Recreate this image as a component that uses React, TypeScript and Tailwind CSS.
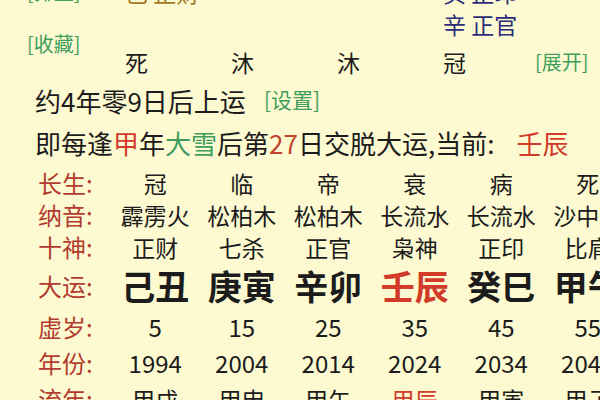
import React from 'react';

const green = 'text-[#3f9e5c]';

const rows: { label: string; values: string[]; kind?: 'big' | 'num' }[] = [
  { label: '长生:', values: ['冠', '临', '帝', '衰', '病', '死'] },
  { label: '纳音:', values: ['霹雳火', '松柏木', '松柏木', '长流水', '长流水', '沙中金'] },
  { label: '十神:', values: ['正财', '七杀', '正官', '枭神', '正印', '比肩'] },
  { label: '大运:', values: ['己丑', '庚寅', '辛卯', '壬辰', '癸巳', '甲午'], kind: 'big' },
  { label: '虚岁:', values: ['5', '15', '25', '35', '45', '55'], kind: 'num' },
  { label: '年份:', values: ['1994', '2004', '2014', '2024', '2034', '2044'], kind: 'num' },
  { label: '流年:', values: ['甲戌', '甲申', '甲午', '甲辰', '甲寅', '甲子'] },
];

const rowHeight: Record<string, string> = {
  '长生:': 'h-[32px]',
  '纳音:': 'h-[32px]',
  '十神:': 'h-[32px]',
  '大运:': 'h-[46px]',
  '虚岁:': 'h-[36px]',
  '年份:': 'h-[36px]',
  '流年:': 'h-[36px]',
};

export default function App() {
  return (
    <div className="w-[600px] h-[400px] overflow-hidden bg-[#fdfad2] text-[#1c1c1c] font-['Noto_Sans_CJK_SC','Noto_Sans',sans-serif]">
      {/* 藏干 / 长生 top block, cut at the top edge */}
      <div className="flex h-[76px]">
        <div className={`w-[125px] pl-[27px] text-[20px] ${green}`}>
          <div className="h-[32px] mt-[-24px] flex items-center">[排盘]</div>
          <div className="mt-[24px] h-[24px] leading-[24px]">[收藏]</div>
        </div>
        <div className="grid grid-cols-[106px_106px_106px_92px_auto] grid-rows-[26px_38px_38px] mt-[-21px] text-[23px] leading-[28px] items-center">
          <div className="text-[#a0782a]">己 正财</div>
          <div />
          <div />
          <div className="text-[#2a2d7a]">癸 正印</div>
          <div />

          <div />
          <div />
          <div />
          <div className="text-[#2a2d7a]">辛 正官</div>
          <div />

          <div>死</div>
          <div>沐</div>
          <div>沐</div>
          <div>冠</div>
          <div className={`text-[20px] ${green}`}>[展开]</div>
        </div>
      </div>

      <div className="h-[48px] flex items-center pl-[35px] text-[26px]">
        约4年零9日后上运
        <span className={`ml-[18px] text-[21px] ${green}`}>[设置]</span>
      </div>

      <div className="h-[36px] flex items-center pl-[35px] text-[26px] whitespace-nowrap">
        即每逢<span className="text-[#d23a2a]">甲</span>年<span className="text-[#3f9e5c]">大雪</span>后第
        <span className="text-[#c0442c]">27</span>日交脱大运,当前:
        <span className="ml-[22px] text-[#d23a2a]">壬辰</span>
      </div>

      <div className="mt-[7px] pl-[38px]">
        {rows.map(row => (
          <div key={row.label} className={`grid grid-cols-[74px_repeat(6,86.5px)] items-center ${rowHeight[row.label]}`}>
            <div className="text-[24px] leading-[30px] text-[#b23b30]">{row.label}</div>
            {row.values.map((v, i) => {
              const current = i === 3 && (row.label === '大运:' || row.label === '流年:');
              return (
                <div
                  key={i}
                  className={`text-center whitespace-nowrap ${
                    row.kind === 'big'
                      ? 'text-[34px] leading-[40px] font-bold'
                      : row.kind === 'num'
                        ? 'text-[24px] leading-[30px]'
                        : 'text-[23px] leading-[30px]'
                  } ${current ? 'text-[#d23a2a]' : ''}`}
                >
                  {v}
                </div>
              );
            })}
          </div>
        ))}
      </div>
    </div>
  );
}
